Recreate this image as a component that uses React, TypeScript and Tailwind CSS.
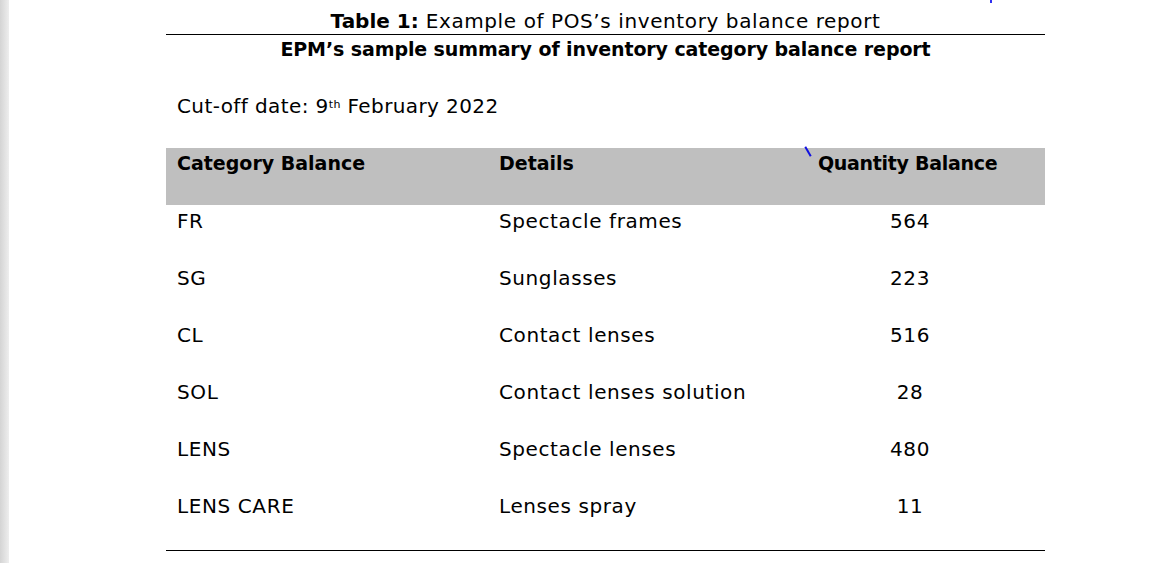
import React from 'react';

const rows = [
  { code: 'FR', details: 'Spectacle frames', qty: '564' },
  { code: 'SG', details: 'Sunglasses', qty: '223' },
  { code: 'CL', details: 'Contact lenses', qty: '516' },
  { code: 'SOL', details: 'Contact lenses solution', qty: '28' },
  { code: 'LENS', details: 'Spectacle lenses', qty: '480' },
  { code: 'LENS CARE', details: 'Lenses spray', qty: '11' },
];

export default function App() {
  return (
    <div className="relative w-[1173px] h-[563px] bg-white overflow-hidden text-black font-['DejaVu_Sans',sans-serif]">
      {/* page edge shadow */}
      <div className="absolute left-0 top-0 h-full w-[9px] bg-gradient-to-r from-[#d4d4d4] to-[#eeeeee]" />
      {/* stray cursor mark */}
      <div className="absolute left-[990px] top-0 w-[2px] h-[3px] bg-[#3030f0]" />

      <div className="ml-[166px] w-[879px] pt-[9px]">
        <div className="text-center text-[20px] leading-[24px] h-[25px] tracking-[0.6px]">
          <span className="font-bold tracking-normal">Table 1:</span> Example of POS’s inventory balance report
        </div>
        <div className="border-t border-black" />
        <div className="text-center font-bold text-[19px] leading-[26px] mt-[1px] tracking-[-0.1px]">
          EPM’s sample summary of inventory category balance report
        </div>

        <div className="pl-[11px] mt-[31px] text-[20px] leading-[26px] tracking-[0.4px]">
          Cut-off date: 9<sup className="text-[11px]">th</sup> February 2022
        </div>

        <div className="mt-[29px] relative flex bg-[#bfbfbf] h-[57px] pt-[2px] font-bold text-[19px] leading-[26px]">
          <div className="w-[322px] pl-[11px]">Category Balance</div>
          <div className="w-[320px] pl-[11px]">Details</div>
          <div className="pl-[10px] tracking-[-0.3px]">Quantity Balance</div>
          <div className="absolute left-[641px] top-[-2px] w-[2px] h-[11px] bg-[#1010e0] -rotate-[30deg]" />
        </div>

        {rows.map((r) => (
          <div key={r.code} className="flex h-[57px] pt-[3px] text-[20px] leading-[26px] tracking-[0.6px]">
            <div className="w-[322px] pl-[11px]">{r.code}</div>
            <div className="w-[320px] pl-[11px]">{r.details}</div>
            <div className="ml-[10px] w-[184px] text-center">{r.qty}</div>
          </div>
        ))}

        <div className="mt-[3px] border-t border-black" />
      </div>
    </div>
  );
}
